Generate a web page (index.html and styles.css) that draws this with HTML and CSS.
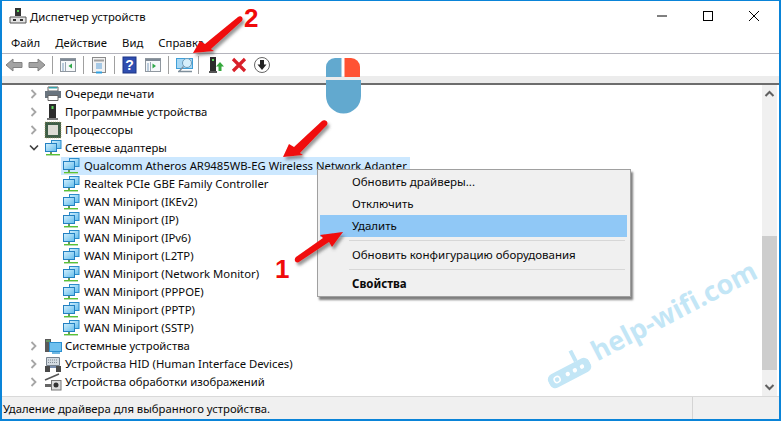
FILE: index.html
```html
<!DOCTYPE html>
<html lang="ru">
<head>
<meta charset="utf-8">
<title>Диспетчер устройств</title>
<link rel="stylesheet" href="styles.css">
</head>
<body>
<svg class="defs" width="0" height="0">
  <defs>
    <linearGradient id="scr" x1="0" y1="0" x2="1" y2="1">
      <stop offset="0" stop-color="#d4f0fd"/>
      <stop offset="1" stop-color="#62bcec"/>
    </linearGradient>
    <symbol id="net" viewBox="0 0 18 18">
      <rect x="7.500" y="1.500" width="9.500" height="8" fill="url(#scr)" stroke="#2b8ccb"/>
      <rect x="1.500" y="4.500" width="11" height="8" fill="url(#scr)" stroke="#2280c2"/>
      <path d="M6 13h2v2H6z" fill="#6a9a58"/>
      <path d="M2 15h14v1.500H2z" fill="#59c336"/>
      <path d="M2 16.500h14" stroke="#b9dcae"/>
    </symbol>
    <symbol id="chev" viewBox="0 0 8 10">
      <path d="M1.500 1l4 4-4 4" fill="none" stroke="#a6a6a6" stroke-width="1.800"/>
    </symbol>
    <symbol id="chevd" viewBox="0 0 10 8">
      <path d="M1 1.500l4 4 4-4" fill="none" stroke="#404040" stroke-width="1.600"/>
    </symbol>
    <symbol id="win" viewBox="0 0 18 18">
      <rect x="1.500" y="2.500" width="15" height="13" fill="#f6f8fa" stroke="#8f979f"/>
      <path d="M1.500 3h15v2h-15z" fill="#7f8a96"/>
      <path d="M6.500 6v9" stroke="#9aa6b2"/>
      <path d="M3 8h2M3 10h2M3 12h2M3 14h2" stroke="#7f9fbf"/>
    </symbol>
  </defs>
</svg>

<div class="window">
  <header class="titlebar">
    <svg class="appicon" width="18" height="18" viewBox="0 0 18 18">
      <path d="M6 1h6v8H6z" fill="#333"/>
      <path d="M8 3h2v2H8z" fill="#5cd65c"/>
      <path d="M1 10h16v6H1z" fill="#e4e4e4" stroke="#555"/>
      <path d="M4 12h3v2H4zM11 12h3v2h-3z" fill="#333"/>
    </svg>
    <span class="title">Диспетчер устройств</span>
    <div class="caption">
      <svg width="46" height="30" viewBox="0 0 46 30"><path d="M18 15h10" stroke="#000"/></svg>
      <svg width="46" height="30" viewBox="0 0 46 30"><rect x="18.500" y="10.500" width="9" height="9" fill="none" stroke="#000" stroke-width="1"/></svg>
      <svg width="46" height="30" viewBox="0 0 46 30"><path d="M18 10l10 10M28 10L18 20" stroke="#000"/></svg>
    </div>
  </header>

  <nav class="menubar">
    <span>Файл</span><span>Действие</span><span>Вид</span><span>Справка</span>
  </nav>

  <div class="toolbar">
    <svg class="tool" width="18" height="18" viewBox="0 0 18 18"><path d="M1 9l7-6v3.500h9v5H8V15z" fill="#a3a3a3" stroke="#828282"/></svg>
    <svg class="tool" width="18" height="18" viewBox="0 0 18 18"><path d="M17 9l-7-6v3.500H1v5h9V15z" fill="#a3a3a3" stroke="#828282"/></svg>
    <i class="sep"></i>
    <svg class="tool" width="18" height="18" viewBox="0 0 18 18"><use href="#win"/><path d="M13 7.500v5l-3.500-2.500z" fill="#2fa84a"/></svg>
    <i class="sep"></i>
    <svg class="tool" width="18" height="18" viewBox="0 0 18 18"><rect x="2.500" y="1.500" width="13" height="15" fill="#f2f2f2" stroke="#8a8a8a"/><path d="M4 4.500h10" stroke="#a0a0a0" stroke-width="2"/><path d="M6 8h6M6 10h6M6 12h6" stroke="#5a9fd8"/><path d="M6 16.500h6" stroke="#2fa0e0" stroke-width="2"/></svg>
    <i class="sep"></i>
    <svg class="tool" width="18" height="18" viewBox="0 0 18 18"><rect x="2" y="1" width="13" height="16" fill="#2f4eb0" stroke="#1d3585"/><text x="8.500" y="14" class="qmark">?</text></svg>
    <svg class="tool" width="18" height="18" viewBox="0 0 18 18"><use href="#win"/><path d="M8.500 7.500v5l3.500-2.500z" fill="#2fa84a"/></svg>
    <i class="sep"></i>
    <svg class="tool wide" width="20" height="18" viewBox="0 0 20 18"><rect x="1.500" y="2.500" width="16" height="10" fill="#a8d8f4" stroke="#3f9fd8"/><circle cx="12" cy="7" r="4.500" fill="#d6effb" stroke="#6c9ab8"/><path d="M8.500 10.500L4 15.500M3 15.500h14" stroke="#7f8f9b" stroke-width="1.300"/></svg>
    <i class="sep"></i>
    <svg class="tool after-sep" width="18" height="18" viewBox="0 0 18 18"><path d="M3 1h6v14H3z" fill="#2c2c2c"/><path d="M5 3h2v2H5z" fill="#5cd65c"/><path d="M2 15h8v2H2z" fill="#555"/><path d="M13 6l4 4.500h-2.500V15h-3v-4.500H9z" fill="#35a83c"/></svg>
    <svg class="tool" width="18" height="18" viewBox="0 0 18 18"><path d="M3 3l12 12M15 3L3 15" stroke="#d9202a" stroke-width="3.200"/></svg>
    <svg class="tool" width="18" height="18" viewBox="0 0 18 18"><circle cx="9" cy="9" r="7.500" fill="#fff" stroke="#666"/><path d="M7 4h4v4.500h2.500L9 14 4.500 8.500H7z" fill="#222"/></svg>
  </div>
  <div class="strip"></div>

  <main class="content">
    <ul class="tree">
      <li class="row"><svg class="tw" width="8" height="10"><use href="#chev"/></svg>
        <svg class="ic" width="18" height="18" viewBox="0 0 18 18"><path d="M4 2h10v4H4z" fill="#fff" stroke="#666"/><path d="M5 2h8v1.500H5z" fill="#35a0a8"/><path d="M1 6h16v7H1z" fill="#69747e"/><path d="M4 10.500h10v5H4z" fill="#fff" stroke="#666"/></svg>
        <span>Очереди печати</span></li>
      <li class="row"><svg class="tw" width="8" height="10"><use href="#chev"/></svg>
        <svg class="ic" width="18" height="18" viewBox="0 0 18 18"><path d="M5 1h7v14H5z" fill="#2c2c2c"/><path d="M7.500 3h2v3h-2z" fill="#5cd65c"/><path d="M3 15h11v2H3z" fill="#777"/></svg>
        <span>Программные устройства</span></li>
      <li class="row"><svg class="tw" width="8" height="10"><use href="#chev"/></svg>
        <svg class="ic" width="18" height="18" viewBox="0 0 18 18"><rect x="1" y="1" width="16" height="16" fill="#3f5f48" stroke="#b9a468" stroke-width=".6" stroke-dasharray="1 1"/><rect x="4" y="4" width="10" height="10" fill="#dcdcd4"/></svg>
        <span>Процессоры</span></li>
      <li class="row"><svg class="tw down" width="10" height="8"><use href="#chevd"/></svg>
        <svg class="ic" width="18" height="18"><use href="#net"/></svg>
        <span>Сетевые адаптеры</span></li>
      <li class="row child selected">
        <svg class="ic" width="18" height="18"><use href="#net"/></svg>
        <span>Qualcomm Atheros AR9485WB-EG Wireless Network Adapter</span></li>
      <li class="row child"><svg class="ic" width="18" height="18"><use href="#net"/></svg><span>Realtek PCIe GBE Family Controller</span></li>
      <li class="row child"><svg class="ic" width="18" height="18"><use href="#net"/></svg><span>WAN Miniport (IKEv2)</span></li>
      <li class="row child"><svg class="ic" width="18" height="18"><use href="#net"/></svg><span>WAN Miniport (IP)</span></li>
      <li class="row child"><svg class="ic" width="18" height="18"><use href="#net"/></svg><span>WAN Miniport (IPv6)</span></li>
      <li class="row child"><svg class="ic" width="18" height="18"><use href="#net"/></svg><span>WAN Miniport (L2TP)</span></li>
      <li class="row child"><svg class="ic" width="18" height="18"><use href="#net"/></svg><span>WAN Miniport (Network Monitor)</span></li>
      <li class="row child"><svg class="ic" width="18" height="18"><use href="#net"/></svg><span>WAN Miniport (PPPOE)</span></li>
      <li class="row child"><svg class="ic" width="18" height="18"><use href="#net"/></svg><span>WAN Miniport (PPTP)</span></li>
      <li class="row child"><svg class="ic" width="18" height="18"><use href="#net"/></svg><span>WAN Miniport (SSTP)</span></li>
      <li class="row"><svg class="tw" width="8" height="10"><use href="#chev"/></svg>
        <svg class="ic" width="18" height="18" viewBox="0 0 18 18"><path d="M1 2h6v13H1z" fill="#5a5a5a"/><path d="M2 4h4" stroke="#6fd06f"/><rect x="5.500" y="5.500" width="12" height="9" fill="#6fc0ee" stroke="#2a8fcf"/><path d="M8 16h8" stroke="#3f9fd8" stroke-width="1.500"/></svg>
        <span>Системные устройства</span></li>
      <li class="row"><svg class="tw" width="8" height="10"><use href="#chev"/></svg>
        <svg class="ic" width="18" height="18" viewBox="0 0 18 18"><path d="M2.500 2.500h13v8h-13z" fill="#d4dbe2" stroke="#76828e"/><path d="M4 5h10M4 7.500h10" stroke="#7f8a94" stroke-dasharray="1 1"/><path d="M1 11h5v6H1zM12 11h5v6h-5z" fill="#4a4a4a"/><path d="M6 11h6v2H6z" fill="#7a8fb0"/></svg>
        <span>Устройства HID (Human Interface Devices)</span></li>
      <li class="row"><svg class="tw" width="8" height="10"><use href="#chev"/></svg>
        <svg class="ic" width="18" height="18" viewBox="0 0 18 18"><path d="M1 7L15 1" stroke="#555" stroke-width="1.500"/><path d="M1 11h6v3H1z" fill="#666"/><rect x="7.500" y="7.500" width="9.500" height="9.500" fill="#ddd" stroke="#777"/><circle cx="12" cy="12" r="2.500" fill="#333"/></svg>
        <span>Устройства обработки изображений</span></li>
    </ul>
    <div class="scrollbar">
      <svg class="sb-arrow" width="15" height="17" viewBox="0 0 15 17"><path d="M3.500 11l4-4 4 4" fill="none" stroke="#606060" stroke-width="2"/></svg>
      <div class="sb-track"><div class="sb-thumb"></div></div>
      <svg class="sb-arrow" width="15" height="17" viewBox="0 0 15 17"><path d="M3.500 6l4 4 4-4" fill="none" stroke="#606060" stroke-width="2"/></svg>
    </div>
  </main>

  <footer class="statusbar">
    <span class="status-text">Удаление драйвера для выбранного устройства.</span>
    <i class="status-cell"></i>
  </footer>

  <div class="watermark">
    <svg class="wm-icon" width="46" height="30" viewBox="0 0 46 30"><rect x="0" y="14" width="46" height="15" rx="6" fill="#c3e6f6"/><circle cx="9" cy="21.500" r="3" fill="none" stroke="#fff" stroke-width="1.500"/><circle cx="21" cy="21.500" r="2.200" fill="#fff"/><circle cx="29" cy="21.500" r="2.200" fill="#fff"/><circle cx="37" cy="21.500" r="2.200" fill="#fff"/><path d="M34 14V2" stroke="#c3e6f6" stroke-width="4"/></svg>
    <span>help-wifi.com</span>
  </div>

  <div class="ctx">
    <div class="ctx-item">Обновить драйверы...</div>
    <div class="ctx-item">Отключить</div>
    <div class="ctx-item active">Удалить</div>
    <hr class="ctx-sep">
    <div class="ctx-item">Обновить конфигурацию оборудования</div>
    <hr class="ctx-sep">
    <div class="ctx-item strong">Свойства</div>
  </div>

  <svg class="overlay" width="781" height="421" viewBox="0 0 781 421">
    <defs>
      <filter id="sh" x="-30%" y="-30%" width="170%" height="170%"><feDropShadow dx="2" dy="3" stdDeviation="1.500" flood-color="#555" flood-opacity=".6"/></filter>
    </defs>
    <g class="mouse">
      <path d="M326 77V67a9 9 0 0 1 9-9h6.500v19z" fill="#62a9cf"/>
      <path d="M344.500 77V58h6.500a9 9 0 0 1 9 9v10z" fill="#ff5233"/>
      <path d="M326 80h35v16a17.500 17.500 0 0 1-35 0z" fill="#62a9cf"/>
    </g>
    <g filter="url(#sh)" fill="#f00a0a">
      <path d="M193 53l7-12 5 3 33-27c3-2 6 1 4 4l-31 28 3 2z"/>
      <path d="M283 157l6-13 5 3 28-26c3-2 7 1 5 4l-27 28 3 2z"/>
      <path d="M343 232l-11 15-3-5-30 20c-3 2-6-2-3-5l27-19-3-3z"/>
    </g>
    <text x="244" y="27" class="num">2</text>
    <text x="275" y="278" class="num">1</text>
  </svg>
</div>
</body>
</html>
```

FILE: styles.css
```css
* { box-sizing: border-box; }
html, body { margin: 0; padding: 0; }
body {
  width: 781px;
  height: 421px;
  overflow: hidden;
  background: #fff;
  font-family: "Noto Sans", "Open Sans", sans-serif;
  font-size: 11.3px;
  color: #0a0a0a;
}
.defs { position: absolute; }
.window {
  position: relative;
  width: 781px;
  height: 421px;
  border: 2px solid #0a84d8;
  border-top-width: 1px;
  display: flex;
  flex-direction: column;
  overflow: hidden;
}
.titlebar {
  height: 30px;
  display: flex;
  align-items: center;
  padding-left: 7px;
  flex: none;
}
.appicon { flex: none; }
.title { margin-left: 3px; }
.caption { margin-left: auto; display: flex; margin-right: 2px; }
.menubar {
  height: 22px;
  display: flex;
  align-items: center;
  gap: 15px;
  padding-left: 9px;
  flex: none;
  background: #fff;
}
.toolbar {
  height: 23px;
  flex: none;
  border-top: 1px solid #b4b4bc;
  display: flex;
  align-items: center;
  padding-left: 3px;
  gap: 5px;
}
.tool { flex: none; }
.sep { width: 1px; height: 18px; margin: 0 1px; background: #a0a0a0; flex: none; }
.wide { margin-right: -3px; }
.after-sep { margin-left: 2px; }
.qmark { font: bold 14px "Liberation Sans", sans-serif; fill: #fff; text-anchor: middle; }
.strip {
  height: 9px;
  flex: none;
  background: #ececec;
  border-bottom: 2px solid #6d6d6d;
}
.content { flex: 1; display: flex; min-height: 0; }
.tree {
  list-style: none;
  margin: 0;
  padding: 0;
  flex: 1;
  min-width: 0;
}
.row {
  height: 18px;
  display: flex;
  align-items: center;
  padding-left: 28px;
  white-space: nowrap;
}
.row > span { margin-left: 3px; padding-bottom: 2px; }
.tw { flex: none; margin-right: 6px; }
.tw.down { margin-left: -1px; margin-right: 5px; }
.row .ic { flex: none; }
.row.child { padding-left: 60px; }
.row.child > span { margin-left: 4px; }
.row.selected {
  margin-left: 59px;
  padding-left: 1px;
  width: 349px;
  background: #cce8ff;
}
.scrollbar {
  width: 15px;
  margin-right: 2px;
  flex: none;
  background: #f0f0f0;
  display: flex;
  flex-direction: column;
}
.sb-arrow { flex: none; }
.sb-track { flex: 1; padding-top: 134px; display: flex; flex-direction: column; }
.sb-thumb { height: 134px; background: #cdcdcd; }
.statusbar {
  height: 23px;
  flex: none;
  background: #f0f0f0;
  border-top: 1px solid #d9d9d9;
  display: flex;
  align-items: center;
  padding-left: 1px;
}
.status-cell { margin-left: auto; width: 87px; height: 100%; border-left: 1px solid #d4d4d4; }
.ctx {
  position: absolute;
  left: 315px;
  top: 168px;
  width: 314px;
  height: 128px;
  background: #f0f0f0;
  border: 1px solid #a0a0a0;
  box-shadow: 2px 3px 2px #7f7f7f;
  padding: 1px 3px 1px 2px;
  font-size: 11.5px;
}
.ctx-item {
  height: 22px;
  line-height: 22px;
  padding-left: 32px;
}
.ctx-item.active { background: #90c8f6; }
.ctx-item.strong { font-weight: 700; }
.ctx-sep {
  border: 0;
  border-top: 1px solid #d7d7d7;
  margin: 3px 2px 3px 29px;
  height: 0;
}
.overlay { position: absolute; left: -2px; top: -1px; pointer-events: none; }
.num { font: bold 26px "Liberation Sans", sans-serif; fill: #f00a0a; }
.watermark {
  position: absolute;
  left: 552px;
  top: 356px;
  display: flex;
  align-items: flex-end;
  gap: 7px;
  transform: rotate(-27.5deg);
  transform-origin: 0 100%;
  color: #c3e6f6;
  font-family: "Open Sans", sans-serif;
  font-weight: 700;
  font-size: 27px;
  line-height: 36px;
  white-space: nowrap;
}
.wm-icon { flex: none; margin-bottom: 2px; }
```
